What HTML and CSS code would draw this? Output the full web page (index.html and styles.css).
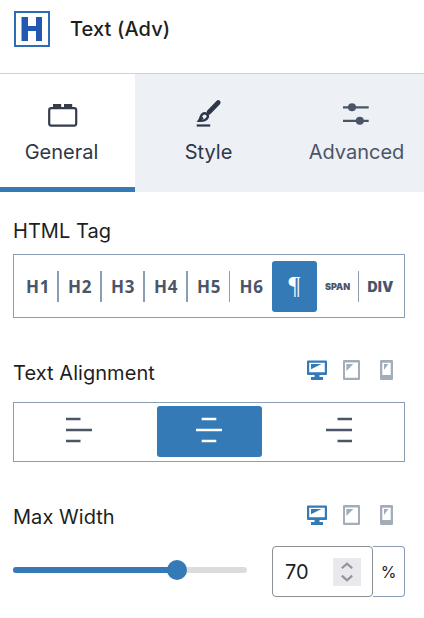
FILE: index.html
```html
<!DOCTYPE html>
<html lang="en">
<head>
    <meta charset="UTF-8">
    <meta name="viewport" content="width=device-width, initial-scale=1.0">
    <title>Text (Adv)</title>
    <link rel="stylesheet" href="styles.css">
</head>
<body>
    <!-- Shared icons -->
    <svg class="sprite" width="0" height="0">
        <symbol id="desktop" viewBox="0 0 20 20">
            <path fill-rule="evenodd" d="M1 0.5H19Q20 0.5 20 1.5V14Q20 15 19 15H12.5V17H16V20H4V17H7.5V15H1Q0 15 0 14V1.5Q0 0.5 1 0.5ZM2.2 2.8V12.2H17.8V2.8Z"/>
            <path d="M4 4H14.5L4 9.3Z"/>
        </symbol>
        <symbol id="tablet" viewBox="0 0 17 20">
            <path fill-rule="evenodd" d="M1.2 0H15.8Q17 0 17 1.2V18.8Q17 20 15.8 20H1.2Q0 20 0 18.8V1.2Q0 0 1.2 0ZM2 2.6V17.8H15V2.6Z"/>
            <path d="M3.4 4H10.4L3.4 11Z"/>
        </symbol>
        <symbol id="phone" viewBox="0 0 13 20">
            <path fill-rule="evenodd" d="M1.2 0H11.8Q13 0 13 1.2V18.8Q13 20 11.8 20H1.2Q0 20 0 18.8V1.2Q0 0 1.2 0ZM2.3 2.8V15H10.7V2.8Z"/>
            <path d="M4 4H8.4L4 10Z"/>
        </symbol>
    </svg>

    <header class="header">
        <svg class="logo" width="36" height="36" viewBox="0 0 36 36">
            <rect x="1" y="1" width="34" height="34" fill="#fff" stroke="#2c6db5" stroke-width="2"/>
            <path d="M7.5 6H14V15H22V6H28V30H22V20H14V30H7.5Z" fill="#2259ae"/>
        </svg>
        <h1>Text (Adv)</h1>
    </header>

    <nav class="tabs">
        <button class="tab active">
            <svg width="34" height="34" viewBox="0 0 34 34">
                <rect x="4.2" y="11.2" width="27" height="17.4" rx="2" fill="none" stroke="#353d4b" stroke-width="2.2"/>
                <path d="M8 7H16.2V11H8ZM19 7H27.2V11H19Z" fill="#353d4b"/>
            </svg>
            <span>General</span>
        </button>
        <button class="tab">
            <svg width="34" height="34" viewBox="0 0 34 34">
                <path d="M17 15.2L26.2 5.6" stroke="#2d3748" stroke-width="4.8" stroke-linecap="round"/>
                <path d="M7 23.8C8.6 22 8.2 19 10.6 17C13.2 15.2 17 17.8 15.6 20.6C14.2 23.6 10.5 24 7 23.8Z" fill="none" stroke="#2d3748" stroke-width="2.4"/>
                <path d="M7.2 23.6L11 20.6" stroke="#2d3748" stroke-width="2"/>
                <path d="M4.7 28.5H18.2" stroke="#2d3748" stroke-width="2.2"/>
            </svg>
            <span>Style</span>
        </button>
        <button class="tab muted">
            <svg width="34" height="34" viewBox="0 0 34 34">
                <path d="M4 10.3H29.7M4 23.8H29.7" stroke="#4a5568" stroke-width="2.3"/>
                <circle cx="13" cy="10.2" r="4" fill="#4a5568"/>
                <circle cx="20.8" cy="23.8" r="4" fill="#4a5568"/>
            </svg>
            <span>Advanced</span>
        </button>
    </nav>

    <main class="panel">
        <section class="control">
            <div class="control-head"><h2>HTML Tag</h2></div>
            <div class="tag-group">
                <button class="tag">H1</button>
                <button class="tag">H2</button>
                <button class="tag">H3</button>
                <button class="tag">H4</button>
                <button class="tag thin">H5</button>
                <button class="tag last">H6</button>
                <button class="tag selected">¶</button>
                <button class="tag thin span">SPAN</button>
                <button class="tag last div">DIV</button>
            </div>
        </section>

        <section class="control">
            <div class="control-head">
                <h2>Text Alignment</h2>
                <div class="devices">
                    <svg class="on" width="20" height="20"><use href="#desktop"/></svg>
                    <svg width="17" height="20"><use href="#tablet"/></svg>
                    <svg width="13" height="20"><use href="#phone"/></svg>
                </div>
            </div>
            <div class="align-group">
                <button class="align">
                    <svg width="26" height="26" viewBox="0 0 26 26"><path d="M0 2H14.5M0 13H26M0 24H14.5"/></svg>
                </button>
                <button class="align selected">
                    <svg width="26" height="26" viewBox="0 0 26 26"><path d="M5.7 2H20.3M0 13H26M5.7 24H20.3"/></svg>
                </button>
                <button class="align">
                    <svg width="26" height="26" viewBox="0 0 26 26"><path d="M11.5 2H26M0 13H26M11.5 24H26"/></svg>
                </button>
            </div>
        </section>

        <section class="control">
            <div class="control-head">
                <h2>Max Width</h2>
                <div class="devices">
                    <svg class="on" width="20" height="20"><use href="#desktop"/></svg>
                    <svg width="17" height="20"><use href="#tablet"/></svg>
                    <svg width="13" height="20"><use href="#phone"/></svg>
                </div>
            </div>
            <div class="range-row">
                <div class="track">
                    <div class="fill" style="width: 70%"></div>
                    <div class="thumb"></div>
                </div>
                <div class="number">
                    <span>70</span>
                    <div class="spinner">
                        <svg width="28" height="28" viewBox="0 0 28 28"><path d="M8.8 10.2L14 5.6L19.2 10.2M8.8 17.6L14 22.2L19.2 17.6"/></svg>
                    </div>
                </div>
                <div class="unit">%</div>
            </div>
        </section>
    </main>
</body>
</html>
```
FILE: styles.css
```css
* {
    box-sizing: border-box;
}

body {
    margin: 0;
    height: 618px;
    overflow: hidden;
    background-color: #fff;
    color: #1e1e1e;
    font-family: Inter, "Liberation Sans", sans-serif;
}

button {
    padding: 0;
    border: none;
    background: none;
    font-family: inherit;
    cursor: pointer;
}

svg {
    display: block;
    flex: none;
}

.sprite {
    display: none;
}

.header {
    display: flex;
    gap: 20px;
    height: 74px;
    padding: 11px 14px 0;
    border-bottom: 1px solid #cbd2db;
}

.header h1 {
    margin: 0;
    font-size: 20px;
    font-weight: 500;
    line-height: 36px;
    letter-spacing: 0.1px;
}

/* Tabs */
.tabs {
    display: grid;
    grid-template-columns: 147px 147px 149px;
    height: 118px;
    margin-left: -12px;
    background-color: #edf0f5;
}

.tab {
    display: flex;
    flex-direction: column;
    align-items: center;
    padding-top: 23px;
    color: #2d3748;
    font-size: 20px;
    line-height: 24px;
}

.tab span {
    margin-top: 9px;
}

.tab.active {
    background-color: #fff;
    border-bottom: 5px solid #337ab7;
}

.tab.muted {
    color: #4a5568;
}

.tab.muted svg {
    margin-right: 2px;
}

/* Controls */
.panel {
    padding: 0 19px 0 13px;
}

.control-head {
    display: flex;
    justify-content: space-between;
    align-items: center;
    height: 62px;
    padding-top: 16px;
}

.control h2 {
    margin: 0;
    font-size: 20px;
    font-weight: 400;
    line-height: 24px;
    letter-spacing: 0.05px;
}

.control + .control .control-head {
    height: 84px;
    padding-top: 26px;
}

.devices {
    display: flex;
    padding: 0 12px 6px 0;
    fill: #a3adba;
}

.control:last-child .devices {
    padding-bottom: 4px;
}

.devices svg + svg {
    margin-left: 16px;
}

.devices svg:last-child {
    margin-left: 20px;
}

.devices .on {
    fill: #337ab7;
}

.tag-group {
    display: grid;
    grid-template-columns: 44px repeat(3, 43px) 42px 42px 45px 42px 45px;
    align-items: center;
    height: 64px;
    padding-left: 1px;
    border: 1px solid #8a9db5;
}

.tag {
    height: 31px;
    padding-left: 1px;
    border-right: 2px solid #8a9db5;
    color: #4a5568;
    font-family: "Noto Sans", sans-serif;
    font-size: 17px;
    font-weight: 700;
    letter-spacing: 0.6px;
}

.tag:first-child {
    padding-left: 4px;
}

.tag.thin {
    border-right-width: 1px;
}

.tag.last {
    border-right: none;
}

.tag.span {
    padding: 0;
    font-family: Inter, sans-serif;
    font-size: 9px;
    font-weight: 900;
    letter-spacing: 0;
}

.tag.div {
    padding: 0 2px 0 0;
    font-family: Inter, sans-serif;
    font-size: 14px;
    font-weight: 900;
    letter-spacing: 0.3px;
}

.tag.selected {
    height: 51px;
    padding: 0;
    border: none;
    border-radius: 3px;
    background-color: #337ab7;
    color: #fff;
    font-family: "Liberation Serif", serif;
    font-size: 26px;
    font-weight: 400;
    letter-spacing: 0;
}

.align-group {
    display: grid;
    grid-template-columns: 129px 105px 131px;
    justify-content: space-between;
    height: 60px;
    padding: 3px 0 4px;
    border: 1px solid #8a9db5;
}

.align {
    display: flex;
    justify-content: center;
    align-items: center;
    padding-bottom: 3px;
    border-radius: 3px;
}

.align path {
    stroke: #4a5568;
    stroke-width: 2.4;
}

.align.selected {
    margin: 0 -1px 0 1px;
    background-color: #337ab7;
}

.align.selected path {
    stroke: #fff;
}

/* Slider */
.range-row {
    display: flex;
    align-items: center;
    height: 51px;
}

.track {
    display: flex;
    align-items: center;
    width: 234px;
    height: 6px;
    margin: -3px 25px 0 0;
    border-radius: 3px;
    background-color: #dcdcde;
}

.fill {
    height: 6px;
    border-radius: 3px;
    background-color: #337ab7;
}

.thumb {
    width: 20px;
    height: 20px;
    margin-left: -10px;
    border-radius: 50%;
    background-color: #337ab7;
}

.number {
    display: flex;
    justify-content: space-between;
    align-items: center;
    width: 101px;
    height: 51px;
    padding: 0 11px 0 12px;
    border: 1px solid #8c8f94;
    border-radius: 4px;
    font-size: 20px;
}

.spinner {
    background-color: #e9e9ed;
}

.spinner path {
    fill: none;
    stroke: #929499;
    stroke-width: 2.2;
}

.unit {
    width: 32px;
    height: 51px;
    border: 1px solid #8a9db5;
    border-left: none;
    border-radius: 0 4px 4px 0;
    font-size: 16px;
    line-height: 51px;
    text-align: center;
}
```
